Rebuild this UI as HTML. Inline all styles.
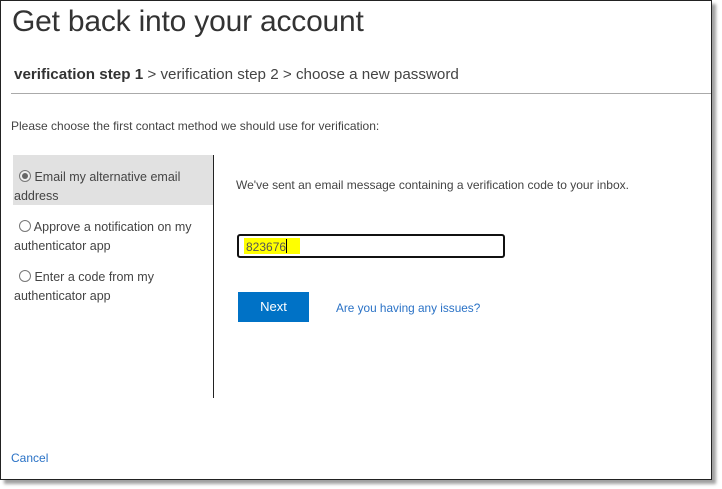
<!DOCTYPE html><html><head><style>
body{margin:0;width:722px;height:489px;background:#fff;font-family:"Liberation Sans",sans-serif;overflow:hidden}
.frame{position:absolute;left:0;top:0;width:710px;height:478px;border:1px solid #222;background:#fff;box-shadow:4px 4px 3px #a0a0a0}
.a{position:absolute;white-space:nowrap}
.t{font-size:12px;color:#444}
</style></head><body><div class="frame">
<div class="a" style="left:11px;top:4px;font-size:30px;font-weight:300;color:#333;letter-spacing:-0.2px">Get back into your account</div>
<div class="a" style="left:13px;top:65px;font-size:15.2px;color:#444"><b style="color:#333">verification step 1</b> &gt; verification step 2 &gt; choose a new password</div>
<div class="a" style="left:10px;top:92px;width:700px;height:1px;background:#aaa"></div>
<div class="a t" style="left:10px;top:118px;font-size:12px">Please choose the first contact method we should use for verification:</div>
<div class="a" style="left:12px;top:154px;width:200px;height:50px;background:#e1e1e1"></div>
<div class="a" style="left:212px;top:154px;width:1px;height:243px;background:#222"></div>
<div class="a t" style="left:13px;top:167px;line-height:19px;font-size:12.5px;white-space:normal;width:198px">
<div style="height:50px"><span style="display:inline-block;width:10px;height:10px;border:1px solid #777;border-radius:50%;background:#eee;vertical-align:-1px;position:relative;margin-left:5px"><span style="position:absolute;left:2px;top:2px;width:6px;height:6px;border-radius:50%;background:#666"></span></span> Email my alternative email<br>address</div>
<div style="height:50px"><span style="display:inline-block;width:10px;height:10px;border:1px solid #777;border-radius:50%;vertical-align:-1px;margin-left:5px"></span> Approve a notification on my<br>authenticator app</div>
<div><span style="display:inline-block;width:10px;height:10px;border:1px solid #777;border-radius:50%;vertical-align:-1px;margin-left:5px"></span> Enter a code from my<br>authenticator app</div>
</div>
<div class="a t" style="left:235px;top:177px;font-size:12px">We've sent an email message containing a verification code to your inbox.</div>
<div class="a" style="left:236px;top:233px;width:264px;height:20px;border:2px solid #111;border-radius:3px"></div>
<div class="a" style="left:243px;top:237px;width:56px;height:16px;background:#ff0"></div>
<div class="a" style="left:245px;top:238px;font-size:12px;color:#555">823676<span style="display:inline-block;width:1px;height:14px;background:#000;vertical-align:-2px"></span></div>
<div class="a" style="left:237px;top:291px;width:71px;height:30px;background:#0072c6;color:#fff;font-size:13px;text-align:center;line-height:30px">Next</div>
<div class="a" style="left:335px;top:300px;font-size:11.8px;color:#2a72c6">Are you having any issues?</div>
<div class="a" style="left:10px;top:450px;font-size:12px;color:#2a72c6">Cancel</div>
</div></body></html>
